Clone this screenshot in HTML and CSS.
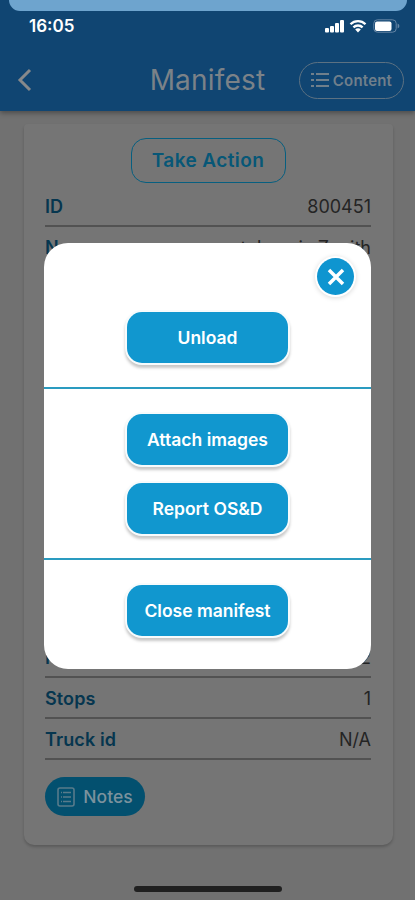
FILE: index.html
```html
<!DOCTYPE html>
<html lang="en">
<head>
    <meta charset="UTF-8">
    <meta name="viewport" content="width=device-width, initial-scale=1.0">
    <title>Manifest</title>
    <link rel="stylesheet" href="styles.css">
</head>
<body>
    <header class="header">
        <div class="status-bar">
            <span class="time">16:05</span>
            <div class="status-icons">
                <svg width="21" height="14" viewBox="0 0 21 14" fill="#fff">
                    <rect x="1" y="9" width="4" height="4.5" rx="1"/>
                    <rect x="6" y="7" width="4" height="6.5" rx="1"/>
                    <rect x="11" y="4" width="4" height="9.5" rx="1"/>
                    <rect x="16" y="1" width="4" height="12.5" rx="1"/>
                </svg>
                <svg width="18" height="14" viewBox="0 0 18 14" fill="none" stroke="#fff" stroke-width="2.3">
                    <path d="M1.5 5.3a10.6 10.6 0 0 1 15 0"/>
                    <path d="M4.4 8.4a6.5 6.5 0 0 1 9.2 0"/>
                    <path d="M6.2 10.5a3.9 3.9 0 0 1 5.6 0L9 13.5z" fill="#fff" stroke="none"/>
                </svg>
                <svg class="battery" width="27" height="14" viewBox="0 0 27 14" fill="none">
                    <rect x=".8" y=".8" width="22.4" height="12.4" rx="3.6" stroke="#6686a5"/>
                    <rect x="2" y="2.5" width="16.5" height="9.5" rx="2" fill="#fff"/>
                    <path d="M24.6 4.5v5q1.8-.7 1.8-2.5t-1.8-2.5z" fill="#6686a5"/>
                </svg>
            </div>
        </div>
        <div class="nav">
            <svg class="back" width="16" height="24" viewBox="0 0 16 24">
                <path d="M14 2 4 12l10 10"/>
            </svg>
            <h1>Manifest</h1>
            <button class="content-btn">
                <svg width="18" height="16" viewBox="0 0 18 16">
                    <path d="M0 2h3M0 8h3M0 14h3M5 2h13M5 8h13M5 14h13"/>
                </svg>
                Content
            </button>
        </div>
    </header>

    <main class="card">
        <button class="action-btn">Take Action</button>
        <div class="row"><b>ID</b><span>800451</span></div>
        <div class="row"><b>Name</b><span>styleomix Zenith</span></div>
        <div class="row-gap"></div>
        <div class="row"><b>Pieces</b><span>2</span></div>
        <div class="row"><b>Stops</b><span>1</span></div>
        <div class="row"><b>Truck id</b><span>N/A</span></div>
        <button class="notes-btn">
            <svg width="18" height="20" viewBox="0 0 18 20">
                <rect x="1" y="1" width="16" height="18" rx="2"/>
                <path d="M4 5.5h1M4 10h1M4 14.5h1M6 5.5h8M6 10h8M6 14.5h8"/>
            </svg>
            Notes
        </button>
    </main>

    <div class="sheet-edge"></div>
    <div class="home-bar"></div>

    <div class="modal">
        <button class="close-btn">
            <svg width="18" height="18" viewBox="0 0 18 18">
                <path d="M2 2l14 14M16 2 2 16"/>
            </svg>
        </button>
        <div class="group first">
            <button class="modal-btn">Unload</button>
        </div>
        <div class="group">
            <button class="modal-btn">Attach images</button>
            <button class="modal-btn">Report OS&amp;D</button>
        </div>
        <div class="group">
            <button class="modal-btn">Close manifest</button>
        </div>
    </div>
</body>
</html>
```
FILE: styles.css
```css
* {
    box-sizing: border-box;
}
body {
    margin: 0;
    height: 900px;
    position: relative;
    overflow: hidden;
    background: #717171;
    font-family: Inter, "Liberation Sans", sans-serif;
}
button {
    font-family: inherit;
    padding: 0;
    border: none;
    display: flex;
    align-items: center;
    justify-content: center;
}
svg {
    display: block;
    flex: none;
}
.header {
    height: 111px;
    padding-top: 11px;
    background: #104572;
    box-shadow: 0 2px 5px rgba(0, 0, 0, 0.35);
}
.status-bar {
    height: 30px;
    padding: 0 15px 0 29px;
    display: flex;
    justify-content: space-between;
    align-items: center;
}
.time {
    color: #fff;
    font-size: 17px;
    font-weight: 600;
}
.status-icons {
    display: flex;
    gap: 4px;
}
.battery {
    margin-left: 2px;
}
.nav {
    height: 70px;
    padding: 8px 11px 0 16px;
    display: grid;
    grid-template-columns: 100px 1fr 105px;
    align-items: center;
}
.back {
    fill: none;
    stroke: #87898b;
    stroke-width: 3;
}
.nav h1 {
    margin: 0;
    text-align: center;
    color: #7b8288;
    font-size: 28px;
    font-weight: 400;
    letter-spacing: 0.2px;
    white-space: nowrap;
}
.content-btn {
    height: 37px;
    gap: 4px;
    border: 1.5px solid #5c7182;
    border-radius: 19px;
    background: none;
    color: #707f8b;
    font-size: 15px;
    font-weight: 600;
    letter-spacing: 0.2px;
}
.content-btn svg {
    stroke: #707f8b;
    stroke-width: 2;
}
.card {
    height: 721px;
    margin: 13px 22px 0 24px;
    padding: 14px 22px 0 21px;
    background: #757575;
    border-radius: 4px 4px 10px 10px;
    box-shadow: 0 2px 3px rgba(0, 0, 0, 0.2);
}
.action-btn {
    width: 155px;
    height: 45px;
    margin: 0 auto 3px;
    border: 1.5px solid #075f80;
    border-radius: 15px;
    background: none;
    color: #075777;
    font-size: 19px;
    font-weight: 600;
    letter-spacing: 0.4px;
}
.row {
    height: 41px;
    padding-top: 1px;
    display: flex;
    justify-content: space-between;
    align-items: center;
    border-bottom: 2px solid #525252;
    color: #242424;
    font-size: 18px;
}
.row b {
    color: #06364f;
    font-weight: 600;
    letter-spacing: 0.1px;
}
/* rows covered by the modal */
.row-gap {
    height: 369px;
}
.notes-btn {
    width: 100px;
    height: 39px;
    margin-top: 17px;
    gap: 8px;
    border-radius: 20px;
    background: #03506f;
    color: #7b929d;
    font-size: 17.5px;
    font-weight: 500;
}
.notes-btn svg {
    fill: none;
    stroke: #587b8b;
    stroke-width: 1.6;
}
.sheet-edge {
    position: absolute;
    top: 0;
    left: 9px;
    right: 8px;
    height: 11px;
    background: #6ea4ce;
    border-radius: 0 0 11px 11px;
}
.home-bar {
    position: absolute;
    left: 134px;
    bottom: 8px;
    width: 148px;
    height: 6px;
    border-radius: 3px;
    background: #202020;
}
.modal {
    position: absolute;
    top: 243px;
    left: 44px;
    width: 327px;
    height: 426px;
    background: #fff;
    border-radius: 24px;
}
.close-btn {
    position: absolute;
    top: 15px;
    right: 17px;
    width: 37px;
    height: 37px;
    border-radius: 50%;
    background: #0f95d0;
    box-shadow: 0 0 0 2px #fff, 0 1px 5px 2px rgba(0, 0, 0, 0.15);
}
.close-btn svg {
    stroke: #fff;
    stroke-width: 3.5;
}
.group {
    padding: 25px 0 24px;
    display: flex;
    flex-direction: column;
    align-items: center;
    gap: 18px;
}
.group.first {
    padding-top: 69px;
}
.group + .group {
    border-top: 2px solid #2a9bc0;
}
.modal-btn {
    width: 161px;
    height: 51px;
    border-radius: 15px;
    background: #1197cf;
    color: #fff;
    font-size: 17.5px;
    font-weight: 600;
    box-shadow: 0 0 0 2px #f7fbfc, 0 3px 3px 2px rgba(0, 0, 0, 0.22);
}
```
